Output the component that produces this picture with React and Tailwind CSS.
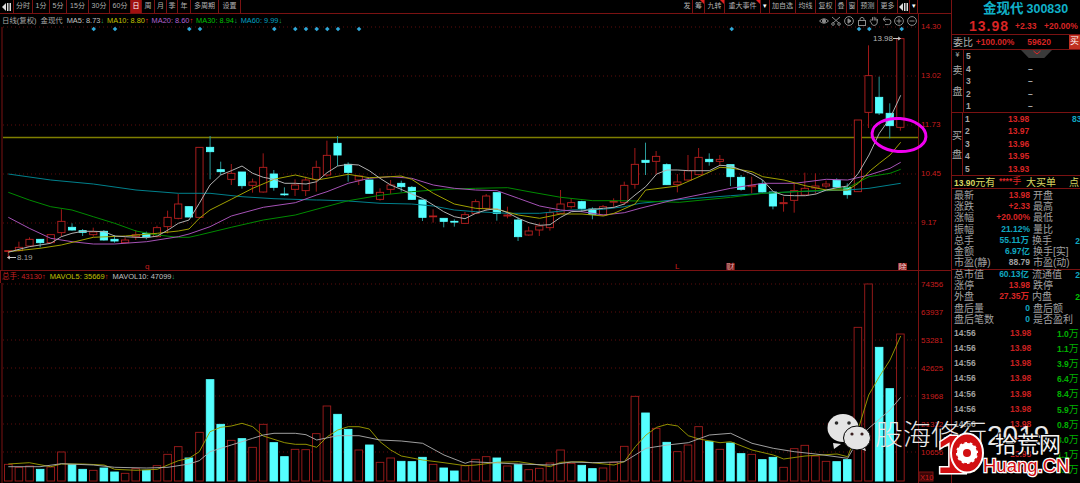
import React from 'react';

const RED = '#c81e1e';
const DARK = '#7a1212';
const CYAN = '#55ffff';

// [type, bodyTop, bodyBottom, high, low], y read off three crops of the chart
const candlesA = [
  ['r',362,363,360,385],['r',352,362,335,365],['r',328,348,322,350],['c',328,338,328,352],['r',314,338,314,340],
  ['r',274,308,238,320],['c',292,300,280,302],['c',302,307,297,318],['r',306,314,293,320],['c',304,330,300,332],
  ['c',328,333,315,338],['r',330,338,322,340],['r',314,320,300,330],['c',310,320,305,328],['r',293,320,287,322],
  ['r',262,290,242,310],['r',222,265,192,268],['c',230,261,230,262],['r',52,262,52,262],['c',52,65,18,148],
  ['c',119,125,95,135],['r',130,148,102,165],['c',126,167,126,176],['r',156,166,146,188],['r',112,186,70,188],
  ['c',132,172,120,182],['c',192,194,172,198],['r',165,178,148,198],['r',150,182,140,198],['r',112,148,92,185],
  ['r',76,135,32,140],['c',40,75,18,108],['c',103,127,97,155],['r',138,150,138,165],['c',150,190,150,190],
  ['r',187,208,175,212],['r',165,178,150,192],['c',160,170,152,185],['c',172,208,168,210],['c',210,262,210,273],
  ['r',258,260,238,278],['c',265,274,265,292],['c',274,276,268,290],['r',254,280,246,282],['r',215,250,208,252],
  ['r',198,235,192,243],['c',188,250,188,272],['r',255,258,230,265],['c',270,320,262,333],['r',303,315,290,317],
  ['r',288,300,280,318],['r',248,293,238,302],['r',222,250,180,252],['r',218,230,205,236],['c',215,235,212,246],
  ['c',237,253,232,268],['r',230,255,225,258],['r',214,216,205,230],['r',166,218,155,225],['r',103,163,54,176],
];
const candlesB = [
  ['c',421,427,368,465],['r',409,424,393,462],['c',434,494,430,495],['r',486,494,462,517],['r',452,480,405,482],
  ['r',412,464,384,466],['c',418,425,400,437],['r',418,424,405,436],['c',434,470,434,498],['c',472,508,465,512],
  ['r',496,500,470,520],['c',492,516,480,518],['c',516,558,516,568],['r',548,551,530,575],['r',512,541,488,578],
  ['r',505,525,458,527],['r',498,504,460,520],['r',492,498,482,505],['c',481,501,475,503],['c',503,524,490,536],
  ['r',300,515,300,516],['r',167,277,76,324],['c',232,279,170,285],['c',280,317,250,355],['r',56,322,56,332],
];
const candles = [
  ...candlesA.map(([t, a, b, h, l]) => [t, 130 + a / 3, 130 + b / 3, 130 + h / 3, 130 + l / 3]),
  ...candlesB.map(([t, a, b, h, l]) => [t, 20 + a / 3, 20 + b / 3, 20 + h / 3, 20 + l / 3]),
];

const volumes = [
  ['r',583],['r',592],['r',588],['c',598],['r',591],['r',546],['c',584],['c',598],['r',601],['c',594],['c',606],
  ['r',610],['r',596],['c',601],['r',587],['r',553],['r',530],['c',564],['r',487],['c',329],['c',463],['r',511],
  ['c',506],['r',532],['r',463],['c',518],['c',560],['r',538],['r',539],['r',491],['r',408],['c',433],['c',478],
  ['r',540],['c',525],['r',577],['r',564],['c',574],['c',575],['c',562],['r',583],['c',594],['c',603],['r',587],
  ['r',568],['r',560],['c',564],['r',588],['c',584],['r',599],['r',595],['r',579],['r',540],['r',580],['c',586],
  ['c',596],['r',594],['r',577],['r',529],['r',379],['c',429],['r',475],['c',517],['r',545],['r',525],['r',470],
  ['c',514],['r',538],['c',519],['c',551],['r',553],['c',569],['c',562],['r',592],['r',536],['r',526],['r',558],
  ['r',574],['c',575],['c',569],['r',172],['r',42],['c',232],['c',356],['r',192],
];

const seg = (ox, oy, pts) => pts.map(([x, y]) => `${(ox + x / 3).toFixed(1)},${(oy + y / 3).toFixed(1)}`).join(' ');

const priceLines = [
  { color: '#00808c', points: [
    seg(0, 130, [[25,132],[152,150],[280,162],[408,180],[535,190],[630,190],[726,200],[822,206],[950,210]]),
    seg(320, 130, [[0,210],[85,213],[180,220],[275,222],[340,228],[403,240],[467,245],[563,250],[659,250],[754,240],[850,238],[913,230],[960,220]]),
    seg(640, 20, [[100,540],[272,527],[368,520],[464,515],[559,512],[623,510],[687,505],[782,490]]),
  ] },
  { color: '#008a00', points: [
    seg(0, 130, [[25,187],[88,210],[152,230],[216,240],[280,260],[344,280],[408,303],[472,315],[535,322],[567,322],[598,315],[694,292],[790,270],[886,255],[960,235]]),
    seg(320, 130, [[85,212],[180,196],[275,185],[370,178],[467,175],[563,173],[627,185],[722,202],[818,212],[882,212],[960,213]]),
    seg(640, 20, [[118,547],[272,532],[368,520],[464,515],[559,510],[623,503],[687,470],[750,460],[782,448]]),
  ] },
  { color: '#a552b5', points: [
    seg(0, 130, [[25,262],[88,295],[152,325],[216,335],[280,342],[344,342],[440,335],[535,320],[567,312],[630,290],[694,258],[790,232],[886,218],[950,195]]),
    seg(320, 130, [[21,185],[85,160],[148,145],[212,140],[275,145],[340,165],[403,175],[467,180],[531,182],[595,205],[659,228],[722,240],[786,245],[850,255],[913,248],[960,235]]),
    seg(640, 20, [[100,540],[200,520],[272,505],[368,490],[464,490],[559,478],[623,480],[687,465],[750,445],[782,427]]),
  ] },
  { color: '#a0a000', points: [
    seg(0, 130, [[25,365],[120,355],[184,345],[280,322],[376,318],[472,310],[535,303],[567,297],[598,265],[630,240],[694,208],[758,175],[822,148],[886,135],[950,150]]),
    seg(320, 130, [[21,145],[85,133],[148,143],[212,140],[243,138],[275,148],[340,190],[403,222],[467,235],[531,238],[595,255],[659,265],[722,252],[786,252],[850,258],[882,250],[945,222]]),
    seg(640, 20, [[17,510],[113,498],[177,470],[240,442],[272,444],[336,455],[368,470],[432,480],[496,497],[559,510],[623,510],[655,490],[687,455],[718,430],[750,405],[782,367]]),
  ] },
  { color: '#b0b0b0', points: [
    seg(0, 130, [[25,367],[57,358],[88,350],[120,345],[152,340],[184,320],[216,310],[248,304],[280,304],[312,305],[344,318],[376,320],[408,322],[440,323],[472,318],[504,300],[535,280],[567,270],[598,220],[630,165],[662,135],[694,122],[726,108],[758,130],[790,142],[822,148],[854,160],[886,160],[918,162],[950,155]]),
    seg(320, 130, [[21,128],[53,108],[85,103],[116,105],[148,122],[180,145],[212,165],[243,178],[275,192],[307,205],[340,225],[371,245],[403,260],[435,266],[467,250],[499,240],[531,236],[563,248],[595,265],[627,278],[659,286],[690,284],[722,262],[754,245],[786,243],[818,238],[850,235],[882,232],[913,222],[945,195]]),
    seg(640, 20, [[17,500],[50,462],[81,450],[113,450],[145,452],[177,452],[208,452],[240,436],[272,438],[304,450],[336,462],[368,480],[400,515],[432,526],[464,527],[496,527],[528,522],[559,510],[591,503],[623,498],[655,460],[687,405],[718,340],[750,295],[782,226]]),
  ] },
];

const volumeLines = [
  { color: '#a0a000', points: [
    seg(0, 270, [[25,582],[88,578],[152,590],[184,582],[248,582],[312,585],[344,598],[408,601],[472,598],[535,572],[567,565],[598,545],[630,485],[662,472],[694,468],[726,460],[758,470],[790,498],[854,518],[886,523],[918,523],[950,532],[982,500],[1013,480],[1045,470],[1077,470],[1108,477],[1140,515],[1172,540],[1204,558],[1268,570],[1332,578],[1396,587]]),
    seg(470, 270, [[18,585],[82,577],[146,575],[241,590],[272,577],[336,575],[432,585],[463,575],[496,530],[528,495],[560,472],[592,463],[623,468],[655,497],[687,507],[750,518],[782,515],[846,540],[910,555],[941,567],[1005,558],[1101,552],[1133,560],[1164,480],[1196,375],[1228,320],[1260,270],[1292,198]]),
  ] },
  { color: '#b0b0b0', points: [
    seg(0, 270, [[25,590],[120,590],[184,581],[280,585],[344,592],[440,594],[504,592],[567,582],[598,572],[630,545],[694,525],[758,505],[790,495],[822,490],[886,490],[918,494],[950,510],[1013,497],[1077,497],[1140,510],[1204,513],[1268,520],[1332,555],[1396,580]]),
    seg(470, 270, [[0,575],[146,582],[241,585],[304,576],[368,578],[463,575],[528,535],[592,525],[655,518],[718,495],[782,490],[846,520],[910,535],[973,545],[1037,552],[1133,565],[1164,510],[1196,475],[1260,420],[1292,382]]),
  ] },
];

const diamonds = [93.7, 115, 189.3, 200, 274.3, 295.3, 306, 316.7, 327.3, 338, 359, 731.7, 859, 869.3, 901.7];
const priceAxis = [['14.30', 26], ['13.02', 75], ['11.73', 124], ['10.45', 173], ['9.17', 222]];
const volAxis = [['74356', 284], ['63937', 312], ['53281', 340], ['42625', 368], ['31968', 396], ['21312', 424], ['10656', 452]];

const xAt = (i) => 8.3 + 10.62 * i;

const leftTabs = [
  ['分时', 'w-[19px]'], ['1分', 'w-[17px]'], ['5分', 'w-[17px]'], ['15分', 'w-[22px]'], ['30分', 'w-[21px]'], ['60分', 'w-[21px]'],
  ['日', 'w-[11px] bg-[#a01010] text-white'], ['周', 'w-[13px]'], ['月', 'w-[12px]'], ['季', 'w-[11px]'], ['年', 'w-[13px]'],
  ['多周期', 'w-[28px]'], ['设置', 'w-[22px]'],
];
const rightTabs = [
  ['发', 'w-[11px]'], ['筹', 'w-[12px]', true], ['九转', 'w-[20px]', true], ['重大事件', 'w-[36px]', true], ['▾', 'w-[9px] text-white'],
  ['加自选', 'w-[26px]'], ['均线', 'w-[20px]'], ['复权', 'w-[20px]'], ['叠', 'w-[11px]'], ['窗', 'w-[11px]'], ['预测', 'w-[20px]'], ['更多', 'w-[20px]'],
];

const Tab = ({ label, cls, flag }) => (
  <div className={`relative flex h-full items-center justify-center border-r border-[#7a1212] ${cls}`}>
    {label}
    {flag && <span className="absolute right-0 top-0 h-0 w-0 border-l-[4px] border-t-[4px] border-l-transparent border-t-[#e02020]" />}
  </div>
);

const BackIcon = () => (
  <svg width="10" height="8" viewBox="0 0 10 8" className="fill-[#dddddd]">
    <path d="M0 4 L4 0 V8 Z M5 0 H6.5 V8 H5 Z M7.5 0 H9 V8 H7.5 Z" />
  </svg>
);

const Toolbar = () => (
  <div className="flex h-[14px] items-center justify-between border-b border-[#7a1212] pr-[33px] text-[7px] text-[#b0b0b0]">
    <div className="flex h-full">
      <div className="flex h-full w-[14px] items-center justify-center border-r border-[#7a1212]"><BackIcon /></div>
      {leftTabs.map(([label, cls]) => <Tab key={label} label={label} cls={cls} />)}
    </div>
    <div className="flex h-full">
      {rightTabs.map(([label, cls, flag]) => <Tab key={label} label={label} cls={cls} flag={flag} />)}
      <div className="flex h-full w-[12px] items-center justify-center border-r border-[#7a1212]"><BackIcon /></div>
      <div className="flex h-full w-[8px] items-center justify-center border-r border-[#7a1212] text-white">▾</div>
    </div>
  </div>
);

const ChartTools = () => (
  <div className="flex items-center gap-[2.6px] text-[#8a8a8a]">
    <svg width="10" height="10" viewBox="0 0 10 10" fill="none" stroke="currentColor"><path d="M0.5 5 Q5 0.5 9.5 5 Q5 9.5 0.5 5 Z" /><circle cx="5" cy="5" r="1.6" fill="currentColor" /></svg>
    <svg width="10" height="10" viewBox="0 0 10 10" fill="none" stroke="currentColor"><path d="M1 1 L8 7 M9 1 L2 7" /><circle cx="2" cy="8" r="1.3" /><circle cx="8" cy="8" r="1.3" /></svg>
    <svg width="10" height="10" viewBox="0 0 10 10" fill="none" stroke="currentColor"><circle cx="5" cy="5" r="4.4" /><path d="M4 2.8 L7 5 L4 7.2 Z" fill="currentColor" /></svg>
    <svg width="10" height="10" viewBox="0 0 10 10" fill="none" stroke="currentColor"><rect x="1.5" y="4.5" width="7" height="5" /><path d="M3 4.5 V2.5 Q5 0 7 2.5 V4.5" /></svg>
    <svg width="10" height="10" viewBox="0 0 10 10" fill="none" stroke="currentColor"><path d="M2 5 V3 M3.5 4.5 V1.2 M5.2 4.5 V0.8 M6.8 4.5 V1.5 M8.2 5.5 V3 V7 Q7.5 9.5 5 9.5 Q3 9.5 2 6.5 L0.8 4.8" /></svg>
    <svg width="10" height="10" viewBox="0 0 10 10" fill="none" stroke="currentColor"><path d="M3.5 1 L1 3.3 L3.5 5.5 M1 3.3 H6.5 Q9 3.3 9 6 Q9 8.6 6.5 8.6 H3" /></svg>
    <svg width="10" height="10" viewBox="0 0 10 10" fill="none" stroke="currentColor"><circle cx="5" cy="5" r="4.4" /><path d="M2.5 5 H7.5 M5 2.5 V7.5" /></svg>
    <svg width="10" height="10" viewBox="0 0 10 10" fill="none" stroke="currentColor"><circle cx="5" cy="5" r="4.4" /><path d="M2.5 5 H7.5" /></svg>
  </div>
);

const Legend = () => (
  <div className="flex h-[13px] items-center justify-between pl-[2px] pr-[34px] text-[7.4px]">
    <div className="flex gap-[3px]">
      <span className="mr-[1px] text-[#a8a8a8]">日线(复权)</span>
      <span className="mr-[1px] text-[#a8a8a8]">金现代</span>
      <span className="text-[#c0c0c0]">MA5: 8.73<span className="text-[#20a060]">↓</span></span>
      <span className="text-[#c0c000]">MA10: 8.80<span className="text-[#e02020]">↑</span></span>
      <span className="text-[#b060d0]">MA20: 8.60<span className="text-[#e02020]">↑</span></span>
      <span className="text-[#00c000]">MA30: 8.94<span className="text-[#20a060]">↓</span></span>
      <span className="text-[#00a0c0]">MA60: 9.99<span className="text-[#20a060]">↓</span></span>
    </div>
    <ChartTools />
  </div>
);

const AxisLabel = ({ y, children }) => (
  <text x="921" y={y + 3} fill={RED} fontSize="8">{children}</text>
);

const PriceChart = () => (
  <svg viewBox="0 27 951 244" className="block h-[244px] w-[951px] overflow-visible">
    {priceAxis.map(([v, y]) => (
      <g key={v}>
        <line x1="3" x2="918" y1={y + 1} y2={y + 1} stroke="#5e0c0c" strokeDasharray="1 3" />
        <AxisLabel y={y}>{v}</AxisLabel>
      </g>
    ))}
    <line x1="2" x2="2" y1="27" y2="271" stroke={DARK} />
    <line x1="918.5" x2="918.5" y1="14" y2="271" stroke={DARK} />
    <line x1="3" x2="918" y1="137.5" y2="137.5" stroke="#7f7f00" strokeWidth="1.6" />
    {diamonds.map((x) => (
      <path key={x} d={`M${x} 26.7 L${x + 2.3} 29 L${x} 31.3 L${x - 2.3} 29 Z`} fill="#30a8d8" />
    ))}
    {candles.map(([t, top, bottom, high, low], i) => {
      const x = xAt(i);
      const up = t === 'r';
      return (
        <g key={i}>
          <line x1={x} x2={x} y1={high} y2={low} stroke={up ? '#a01818' : '#2a9a9a'} />
          <rect x={x - 3.6} y={top} width="7.2" height={Math.max(bottom - top, 0.8)} fill={up ? '#000000' : CYAN} stroke={up ? '#b82020' : CYAN} strokeWidth="0.9" />
        </g>
      );
    })}
    {priceLines.map((l) => (
      <polyline key={l.color} points={l.points.join(' ')} fill="none" stroke={l.color} strokeWidth="1" />
    ))}
    <path d="M893 38.5 H900 M898 37 L900.5 38.5 L898 40" fill="none" stroke="#c8c8c8" />
    <text x="873" y="41" fill="#b8b8b8" fontSize="8">13.98</text>
    <path d="M16 257.5 H8 M10 256 L7.5 257.5 L10 259" fill="none" stroke="#c8c8c8" />
    <text x="17" y="260" fill="#a0a0a0" fontSize="8">8.19</text>
    <text x="145" y="269" fill={RED} fontSize="8">q</text>
    <text x="675" y="269" fill={RED} fontSize="8">L</text>
    <rect x="726" y="263" width="9" height="8" fill="#6a1414" />
    <text x="726.5" y="270" fill="#e0a0a0" fontSize="8">财</text>
    <rect x="898" y="263" width="9" height="8" fill="#8a2020" />
    <text x="898.5" y="270" fill="#f0d0d0" fontSize="8">除</text>
    <ellipse cx="899" cy="135" rx="27" ry="16.5" fill="none" stroke="#f000f0" strokeWidth="3" transform="rotate(4 899 135)" />
    <line x1="0" x2="951" y1="270.5" y2="270.5" stroke={DARK} />
  </svg>
);

const VolumeLegend = () => (
  <div className="flex h-[12px] items-center gap-[4px] border-l border-[#7a1212] pl-[1px] text-[7.5px]">
    <span className="text-[#c82020]">总手: 43130<span className="text-[#e02020]">↑</span></span>
    <span className="text-[#c0c000]">MAVOL5: 35669<span className="text-[#e02020]">↑</span></span>
    <span className="text-[#c0c0c0]">MAVOL10: 47099<span className="text-[#20a060]">↓</span></span>
  </div>
);

const VolumeChart = () => (
  <svg viewBox="0 283 951 200" className="block h-[200px] w-[951px] overflow-visible">
    {volAxis.map(([v, y]) => (
      <g key={v}>
        <line x1="3" x2="918" y1={y} y2={y} stroke="#5e0c0c" strokeDasharray="1 3" />
        <AxisLabel y={y}>{v}</AxisLabel>
      </g>
    ))}
    <line x1="2" x2="2" y1="283" y2="483" stroke={DARK} />
    <line x1="918.5" x2="918.5" y1="271" y2="483" stroke={DARK} />
    {volumes.map(([t, z], i) => {
      const x = xAt(i);
      const top = 270 + z / 3;
      const up = t === 'r';
      return (
        <rect key={i} x={x - 3.8} y={top} width="7.6" height={481 - top} fill={up ? '#000000' : CYAN} stroke={up ? '#a01c1c' : CYAN} strokeWidth="0.9" />
      );
    })}
    {volumeLines.map((l) => (
      <polyline key={l.color} points={l.points.join(' ')} fill="none" stroke={l.color} strokeWidth="0.9" />
    ))}
    <rect x="919" y="472" width="14" height="9" fill="#3a0606" stroke={DARK} />
    <text x="920" y="479.5" fill={RED} fontSize="7.5">X10</text>
  </svg>
);

const sellRows = ['5', '4', '3', '2', '1'];
const buyRows = [['1', '13.98', '83'], ['2', '13.97'], ['3', '13.96'], ['4', '13.95'], ['5', '13.93']];

const stats = [
  ['最新', '13.98', 'text-[#d82424]', '开盘'],
  ['涨跌', '+2.33', 'text-[#d82424]', '最高'],
  ['涨幅', '+20.00%', 'text-[#d82424]', '最低'],
  ['振幅', '21.12%', 'text-[#10a8c0]', '量比'],
  ['总手', '55.11万', 'text-[#10a8c0]', '换手', '2', 'text-[#10a8c0]'],
  ['金额', '6.97亿', 'text-[#10a8c0]', '换手[实]'],
  ['市盈(静)', '88.79', 'text-[#a0a0a0]', '市盈(动)'],
  ['总市值', '60.13亿', 'text-[#10a8c0]', '流通值', '2', 'text-[#10a8c0]'],
  ['涨停', '13.98', 'text-[#d82424]', '跌停'],
  ['外盘', '27.35万', 'text-[#d82424]', '内盘', '2', 'text-[#00c000]'],
  ['盘后量', '0', 'text-[#10a8c0]', '盘后额'],
  ['盘后笔数', '0', 'text-[#10a8c0]', '是否盈利'],
];

const ticks = ['1.0', '1.1', '3.9', '6.4', '8.4', '5.9', '0.8', '3.0', '1.1', '3.8'];

const SidePanel = () => (
  <aside className="h-[483px] w-[129px] shrink-0 overflow-hidden border-l border-[#7a1212]">
    <div className="flex h-[18px] items-center gap-[3px] whitespace-nowrap pl-[31px] font-bold text-[#10b0c8]">
      <span className="text-[13.5px]">金现代</span>
      <span className="text-[12.5px]">300830</span>
    </div>
    <div className="flex h-[17px] items-center whitespace-nowrap border-b border-[#7a1212] pl-[17px] font-bold text-[#d82424]">
      <span className="w-[46px] text-[14px] tracking-[1px]">13.98</span>
      <span className="w-[29px] text-[8.5px]">+2.33</span>
      <span className="text-[8.5px]">+20.00%</span>
    </div>
    <div className="flex h-[15px] items-center whitespace-nowrap border-b border-[#7a1212] pl-[1px] text-[9px]">
      <span className="w-[23px] text-[10px] text-[#b0b0b0]">委比</span>
      <span className="w-[52px] font-bold text-[8.5px] text-[#d82424]">+100.00%</span>
      <span className="w-[42px] font-bold text-[8.5px] text-[#d82424]">59620</span>
      <span className="w-[11px] bg-[#c03020] px-[1px] text-[9px] text-white">买</span>
    </div>
    <div className="relative flex h-[63px] border-b border-[#7a1212]">
      <div className="flex w-[12px] flex-col items-center border-r border-[#7a1212] pt-[1px] text-[10px] leading-none text-[#a8a8a8]">
        <span className="h-[15px] text-[7px]">¥</span>
        <span className="h-[21px]">卖</span>
        <span>盘</span>
      </div>
      <div className="flex-1">
        {sellRows.map((n) => (
          <div key={n} className="flex h-[12.6px] items-center pl-[2px] text-[8.5px] font-bold text-[#a8a8a8]">
            <span className="w-[62px]">{n}</span>
            <span>–</span>
          </div>
        ))}
      </div>
      <div className="absolute left-[69px] top-0 flex h-[8px] w-[31px] items-start justify-center bg-[#3a3a3a] [clip-path:polygon(0_0,100%_0,75%_100%,25%_100%)]">
        <svg width="8" height="5" viewBox="0 0 8 5" fill="none" stroke="#e02828"><path d="M0.5 1 L4 4 L7.5 1" /></svg>
      </div>
    </div>
    <div className="flex h-[63px] border-b border-[#7a1212]">
      <div className="flex w-[12px] flex-col items-center gap-[9px] border-r border-[#7a1212] pt-[18px] text-[10px] leading-none text-[#a8a8a8]">
        <span>买</span>
        <span>盘</span>
      </div>
      <div className="flex-1">
        {buyRows.map(([n, p, q]) => (
          <div key={n} className="flex h-[12.5px] items-center whitespace-nowrap pl-[2px] text-[8.5px] font-bold">
            <span className="w-[43px] text-[#a8a8a8]">{n}</span>
            <span className="w-[64px] text-[#d82424]">{p}</span>
            {q && <span className="text-[#10a8c0]">{q}</span>}
          </div>
        ))}
      </div>
    </div>
    <div className="flex h-[13px] items-center whitespace-nowrap border-b border-[#7a1212] pl-[2px] text-[10px] text-[#d8d860]">
      <span className="w-[45px]"><span className="font-bold text-[8.5px]">13.90</span>元有</span>
      <span className="w-[27px] font-bold text-[8.5px] text-[#d82424]">****<span className="font-normal text-[9px]">手</span></span>
      <span className="w-[43px]">大买单</span>
      <span>点</span>
    </div>
    <div className="pt-[1px]">
      {stats.map(([a, v, cls, b, w, wCls], i) => (
        <div key={a} className={`flex h-[11.3px] items-center whitespace-nowrap pl-[2px] text-[10px] leading-none text-[#a0a0a0] ${i === 7 ? 'border-t border-[#7a1212]' : ''}`}>
          <span className="flex w-[79px] justify-between pr-[3px]">
            <span>{a}</span>
            <span className={`font-bold text-[8.5px] ${cls}`}>{v}</span>
          </span>
          <span className="w-[44px]">{b}</span>
          {w && <span className={`font-bold text-[8.5px] ${wCls}`}>{w}</span>}
        </div>
      ))}
    </div>
    <div>
      {ticks.map((q, i) => (
        <div key={i} className="flex h-[15.2px] items-center whitespace-nowrap pl-[2px] text-[8.5px] font-bold">
          <span className="w-[56px] text-[#a0a0a0]">14:56</span>
          <span className="w-[47px] text-[#c82020]">13.98</span>
          <span className="text-[#00b000]">{q}<span className="text-[10px] font-normal">万</span></span>
        </div>
      ))}
    </div>
  </aside>
);

const WeChatMark = () => (
  <svg width="50" height="42" viewBox="826 412 50 42" className="absolute left-[826px] top-[412px]">
    <path d="M833 443 L834 449 L841 444 Z" fill="#e0e0e0" />
    <ellipse cx="843" cy="428" rx="15.5" ry="14" fill="#e4e4e4" />
    <path d="M864 445 L866 451 L858 448 Z" fill="#e0e0e0" />
    <ellipse cx="857" cy="438" rx="13.5" ry="12" fill="#e4e4e4" stroke="#000000" strokeWidth="1" />
    <circle cx="836.5" cy="423" r="1.8" fill="#2a2a2a" />
    <circle cx="849" cy="423" r="1.8" fill="#2a2a2a" />
    <circle cx="852" cy="434" r="1.6" fill="#3a2020" />
    <circle cx="862" cy="434" r="1.6" fill="#3a2020" />
  </svg>
);

const HuangLogo = () => (
  <svg width="145" height="56" viewBox="935 427 145 56" className="absolute left-[935px] top-[427px]">
    <text x="937" y="473" fontSize="54" fontWeight="700" fill="#d20f12" stroke="#ffffff" strokeWidth="3" className="[paint-order:stroke_fill]">1</text>
    <ellipse cx="967" cy="453" rx="16" ry="19.5" fill="#d20f12" stroke="#ffffff" strokeWidth="2" />
    <circle cx="967" cy="453" r="11" fill="#ffffff" />
    <circle cx="967" cy="453" r="11.5" fill="none" stroke="#d20f12" strokeWidth="3" strokeDasharray="3 3" />
    <circle cx="967" cy="453" r="4" fill="#d20f12" />
    <text x="995" y="452" fontSize="22" fill="#f4f4f4" stroke="#000000" strokeWidth="2" className="[paint-order:stroke_fill]">拾荒网</text>
    <text x="983" y="472" fontSize="18.5" fill="#d20f12" stroke="#ffffff" strokeWidth="2.5" className="[paint-order:stroke_fill]">Huang.CN</text>
  </svg>
);

export default function App() {
  return (
    <div className="relative flex h-[483px] w-[1080px] overflow-hidden bg-black font-['Liberation_Sans','Noto_Sans_CJK_SC',sans-serif]">
      <main className="w-[951px] shrink-0">
        <Toolbar />
        <Legend />
        <PriceChart />
        <VolumeLegend />
        <VolumeChart />
      </main>
      <SidePanel />
      <WeChatMark />
      <div className="absolute left-[875px] top-[418px] whitespace-nowrap text-[28px] font-light leading-[36px] text-[#e8e8e8]">股海修行2019</div>
      <HuangLogo />
    </div>
  );
}
